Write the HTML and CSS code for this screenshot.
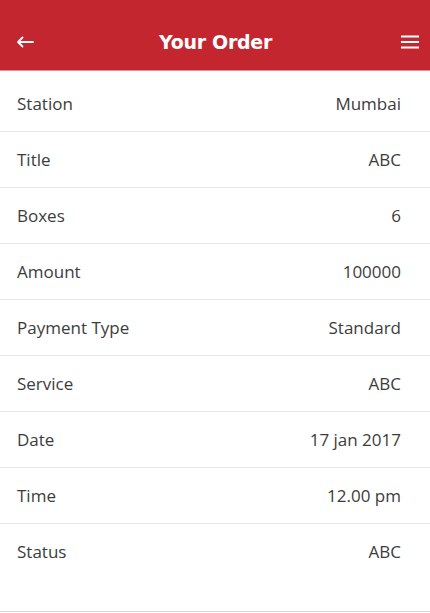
FILE: index.html
```html
<!DOCTYPE html>
<html lang="en">
  <head>
    <meta charset="UTF-8" />
    <meta name="viewport" content="width=device-width, initial-scale=1.0" />
    <title>Your Order</title>
    <link rel="stylesheet" href="styles.css">
  </head>

  <body>
    <header class="topbar">
      <button class="icon-btn" aria-label="Back">
        <svg width="18" height="12" viewBox="0 0 18 12">
          <path d="M17 6H2M6.5 1.5L2 6l4.5 4.5" fill="none" stroke="#fff" stroke-width="1.8" stroke-linecap="round" stroke-linejoin="round" />
        </svg>
      </button>
      <h1 class="title">Your Order</h1>
      <button class="icon-btn" aria-label="Menu">
        <svg width="18" height="14" viewBox="0 0 18 14">
          <path d="M0 1.5h18M0 7h18M0 12.5h18" stroke="#fff" stroke-width="2" />
        </svg>
      </button>
    </header>

    <ul class="order-list">
      <li class="order-row"><span>Station</span><span>Mumbai</span></li>
      <li class="order-row"><span>Title</span><span>ABC</span></li>
      <li class="order-row"><span>Boxes</span><span>6</span></li>
      <li class="order-row"><span>Amount</span><span>100000</span></li>
      <li class="order-row"><span>Payment Type</span><span>Standard</span></li>
      <li class="order-row"><span>Service</span><span>ABC</span></li>
      <li class="order-row"><span>Date</span><span>17 jan 2017</span></li>
      <li class="order-row"><span>Time</span><span>12.00 pm</span></li>
      <li class="order-row last"><span>Status</span><span>ABC</span></li>
    </ul>
  </body>
</html>
```

FILE: styles.css
```css
body {
  margin: 0;
  font: normal 17px "Open Sans", sans-serif;
  color: #3c3c3c;
  background-color: #fff;
}

.topbar {
  height: 71px;
  background-color: #c3262f;
  display: flex;
  align-items: center;
  justify-content: space-between;
  padding: 13px 11px 0 16px;
  box-sizing: border-box;
  border-bottom: 1px solid #e98a8f;
}

.icon-btn {
  background: none;
  border: none;
  padding: 0;
  display: flex;
  align-items: center;
  cursor: pointer;
}

.title {
  margin: 0 0 0 -4px;
  color: #fff;
  font: bold 19px "DejaVu Sans", sans-serif;
  letter-spacing: -0.3px;
}

.order-list {
  list-style: none;
  margin: 0;
  padding: 5px 0 0;
}

.order-row {
  height: 55px;
  display: flex;
  align-items: center;
  justify-content: space-between;
  padding: 0 29px 0 17px;
  border-bottom: 1px solid #e6e6e6;
}

.order-row.last {
  box-sizing: border-box;
  height: 88px;
  padding-bottom: 32px;
  border-bottom-color: #d6d6d6;
}
```
